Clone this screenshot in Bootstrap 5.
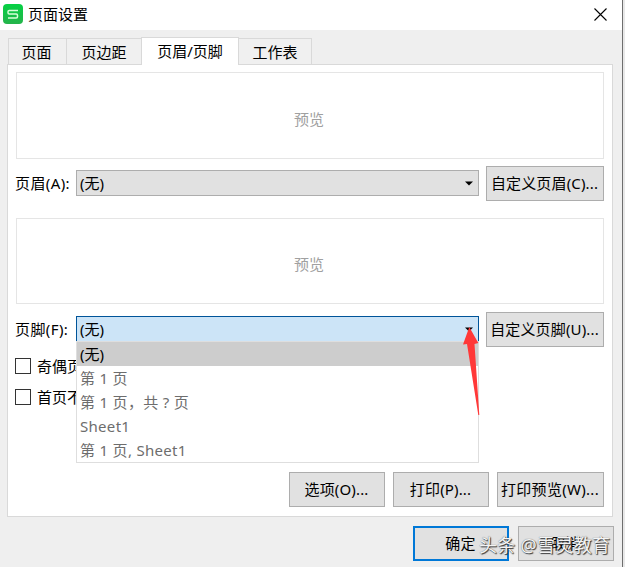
<!DOCTYPE html>
<html lang="zh-CN">
<head>
<meta charset="utf-8">
<title>页面设置</title>
<link href="https://cdn.jsdelivr.net/npm/bootstrap@5.3.0/dist/css/bootstrap.min.css" rel="stylesheet">
<style>
body{font:15px/20px "Noto Sans","Noto Sans CJK SC",sans-serif;color:#000;background:#e8e8e8;overflow:hidden}
.dialog{width:623px;height:567px;background:#efefef;border-right:1px solid #6e6e6e}
.titlebar{height:30px;padding:0 15px 2px 3px}
.titlebar .app-name{margin-left:5px}
.page-tabs{height:35px;padding:8px 0 0 8px;margin:0;border:0;position:relative;z-index:1}
.page-tabs .nav-link{height:26px;padding:0;border:1px solid #d9d9d9;border-bottom:0;border-radius:0;color:#000;background:#f0f0f0;margin:0 0 0 -1px;line-height:26px;text-align:center}
.page-tabs .nav-link.active{height:28px;margin-top:-1px;background:#fff;color:#000;border-color:#d9d9d9}
.page-tabs .t1{width:59px;margin-left:0;padding-right:2px}.page-tabs .t2{width:76px}.page-tabs .t3{width:98px}.page-tabs .t4{width:74px}
.page-panel{margin:-1px 0 0 7px;width:606px;height:453px;border:1px solid #d9d9d9;padding:7px 8px 9px;background:#fff}
.preview{height:87px;border:1px solid #e5e5e5;color:#a0a0a0;padding:6px 2px 0 0}
.preview.second{height:86px;margin-top:17px}
.field{height:35px;margin-top:7px}
.field.lower{margin-top:8px}
.field-label{width:61px;margin:-2px 0 0 -1px;white-space:nowrap;letter-spacing:.4px}
.combo{width:403px;height:26px;border:1px solid #adadad;background:#e1e1e1;padding:0 5px 0 3px;margin:-1px 7px 0 0}
.combo.open{background:#cce4f7;border-color:#005499}
.btn-win{height:35px;border:1px solid #adadad;border-radius:0;background:#e1e1e1;color:#000;padding:0 1px 1px 0;font-size:15px;line-height:20px;width:96px;white-space:nowrap;letter-spacing:.15px}
.btn-win.custom{width:118px}.btn-win.wide{width:107px;letter-spacing:.3px}
.btn-win.primary{border:2px solid #0078d7}
.choices{left:60px;top:29px;width:403px;height:122px;border:1px solid #dedede;border-radius:0;background:#fff;z-index:2}
.choices .list-group-item{height:24px;padding:1px 0 0 3px;border:0;color:#6d6d6d;border-radius:0;line-height:22px;background:#fff;white-space:pre;letter-spacing:.3px}
.choices .list-group-item.chosen{background:#cdcdcd;color:#000;letter-spacing:0}
.form-check-input.win-check{width:16px;height:16px;border:1px solid #333;border-radius:0;margin:0;background:#fff;flex:none}
.check-row{width:61px;height:16px;margin:11px 0 0 -1px;gap:6px;white-space:nowrap}
.check-row + .check-row{margin-top:15px}
.footer-row{padding:9px 8px 0 0;gap:9px}
.pointer{left:462px;top:325px;z-index:3}
.stamp{left:479px;top:534px;font-size:18px;line-height:22px;color:#f4f4f4;z-index:4;white-space:nowrap;letter-spacing:.3px;text-shadow:1px 1px 1px #333,0 0 1px #555}
</style>
</head>
<body class="m-0">
<div class="dialog position-relative">
  <div class="titlebar bg-white d-flex align-items-center">
    <svg width="20" height="20" viewBox="0 0 20 20"><defs><linearGradient id="g" x2="0" y2="1"><stop stop-color="#05d144"/><stop offset="1" stop-color="#25b34b"/></linearGradient></defs><rect width="20" height="20" rx="4" fill="url(#g)"/><path d="M15 6.5H6.2Q5 6.5 5 7.8V8.8Q5 10 6.2 10H13.2Q14.5 10 14.5 11.2V12.8Q14.5 14 13.2 14H5" fill="none" stroke="#d8ffd9" stroke-width="1.5"/></svg>
    <span class="app-name">页面设置</span>
    <svg class="ms-auto" width="13" height="13" viewBox="0 0 13 13"><path d="M.5.5l12 12M12.5.5l-12 12" stroke="#000" stroke-width="1.1"/></svg>
  </div>
  <div class="nav nav-tabs page-tabs flex-nowrap align-items-start">
    <a class="nav-link t1">页面</a><a class="nav-link t2">页边距</a><a class="nav-link active t3">页眉/页脚</a><a class="nav-link t4">工作表</a>
  </div>
  <div class="page-panel d-flex flex-column">
    <div class="preview d-flex align-items-center justify-content-center">预览</div>
    <div class="field d-flex align-items-center">
      <label class="field-label">页眉(A):</label>
      <div class="combo d-flex align-items-center justify-content-between"><span>(无)</span><svg width="8" height="5" viewBox="0 0 8 5"><path d="M0 .5h8L4 4.5z"/></svg></div>
      <button class="btn btn-win custom">自定义页眉(C)...</button>
    </div>
    <div class="preview second d-flex align-items-center justify-content-center">预览</div>
    <div class="field lower d-flex align-items-center position-relative">
      <label class="field-label">页脚(F):</label>
      <div class="combo open d-flex align-items-center justify-content-between"><span>(无)</span><svg width="8" height="5" viewBox="0 0 8 5"><path d="M0 .5h8L4 4.5z"/></svg></div>
      <button class="btn btn-win custom">自定义页脚(U)...</button>
      <div class="list-group choices position-absolute">
        <div class="list-group-item chosen">(无)</div>
        <div class="list-group-item">第 1 页</div>
        <div class="list-group-item">第 1 页，共 ? 页</div>
        <div class="list-group-item">Sheet1</div>
        <div class="list-group-item">第 1 页, Sheet1</div>
      </div>
    </div>
    <div class="check-row d-flex align-items-center"><input type="checkbox" class="form-check-input win-check"><span>奇偶页</span></div>
    <div class="check-row d-flex align-items-center"><input type="checkbox" class="form-check-input win-check"><span>首页不</span></div>
    <div class="d-flex justify-content-end gap-2 mt-auto">
      <button class="btn btn-win">选项(O)...</button>
      <button class="btn btn-win">打印(P)...</button>
      <button class="btn btn-win wide">打印预览(W)...</button>
    </div>
  </div>
  <div class="footer-row d-flex justify-content-end">
    <button class="btn btn-win primary">确定</button>
    <button class="btn btn-win">取消</button>
  </div>
  <svg class="pointer position-absolute" width="18" height="91" viewBox="0 0 18 91"><path d="M7.3 2L16.3 18 12.5 19 17.3 90H16.3L5 19 1 19.5z" fill="#ff3838"/></svg>
  <div class="stamp position-absolute">头条 @雪灵教育</div>
</div>
<script src="https://cdn.jsdelivr.net/npm/bootstrap@5.3.0/dist/js/bootstrap.bundle.min.js"></script>
</body>
</html>
